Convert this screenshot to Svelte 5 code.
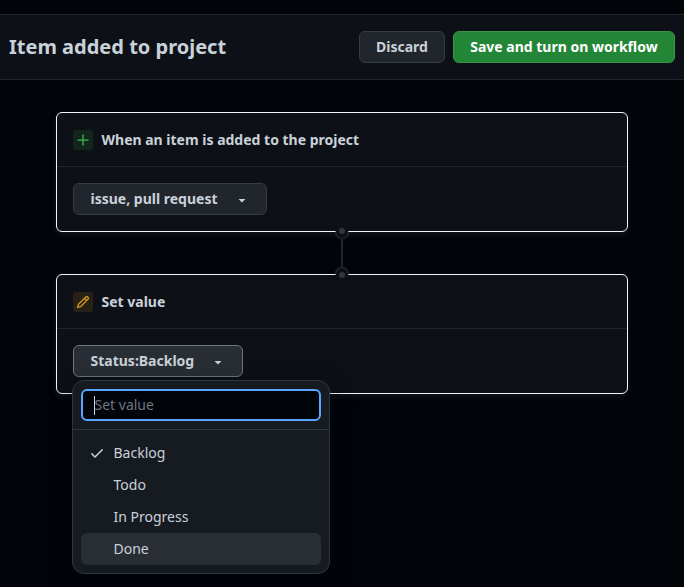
<script>
  const options = ['Backlog', 'Todo', 'In Progress', 'Done'];
  let selected = $state('Backlog');
  let highlighted = $state('Done');
  let query = $state('');
</script>

<div class="page">
  <header>
    <h1>Item added to project</h1>
    <button class="btn discard">Discard</button>
    <button class="btn primary">Save and turn on workflow</button>
  </header>

  <main>
    <section class="card">
      <div class="card-head">
        <span class="badge add">
          <svg width="16" height="16" viewBox="0 0 16 16" fill="currentColor"><path d="M7.300 2.500h1.300v4.900H13.500v1.300H8.600V13.500H7.300V8.700H2.500V7.400h4.800z" /></svg>
        </span>
        <h2>When an item is added to the project</h2>
      </div>
      <div class="card-body">
        <button class="btn select issue">issue, pull request <span class="caret"></span></button>
      </div>
    </section>

    <div class="link">
      <svg width="20" height="60" viewBox="0 0 20 60" fill="none">
        <path d="M10 15v30" stroke="#21262d" stroke-width="2" />
        <circle cx="10" cy="8" r="6.500" fill="#0d1117" />
        <circle cx="10" cy="52" r="6.500" fill="#0d1117" />
        <path d="M3.500 9a6.500 6.500 0 0 0 13 0M3.500 51a6.500 6.500 0 0 1 13 0" stroke="#21262d" stroke-width="1.500" />
        <circle cx="10" cy="8" r="3" fill="#30363d" />
        <circle cx="10" cy="52" r="3" fill="#30363d" />
      </svg>
    </div>

    <section class="card">
      <div class="card-head">
        <span class="badge edit">
          <svg width="14" height="14" viewBox="0 0 16 16" fill="currentColor"><path d="M11.013 1.427a1.750 1.750 0 0 1 2.474 0l1.086 1.086a1.750 1.750 0 0 1 0 2.474l-8.610 8.610c-.210.210-.470.364-.756.445l-3.251.930a.750.750 0 0 1-.927-.928l.929-3.250c.081-.286.235-.547.445-.758l8.610-8.610Zm.176 4.823L9.750 4.810l-6.286 6.287a.253.253 0 0 0-.064.108l-.558 1.953 1.953-.558a.253.253 0 0 0 .108-.064Zm1.238-3.763a.250.250 0 0 0-.354 0L10.811 3.750l1.439 1.440 1.263-1.263a.250.250 0 0 0 0-.354Z" /></svg>
        </span>
        <h2>Set value</h2>
      </div>
      <div class="card-body">
        <button class="btn select status">Status:{selected} <span class="caret"></span></button>
        <div class="menu">
          <div class="filter">
            <div class="field">
              <i class="cursor"></i>
              <input placeholder="Set value" bind:value={query} />
            </div>
          </div>
          <ul>
            {#each options as option}
              <li class:active={option === highlighted}>
                <button onclick={() => (selected = option)} onmouseenter={() => (highlighted = option)}>
                  <span class="mark">
                    {#if option === selected}
                      <svg width="16" height="16" viewBox="0 0 16 16" fill="currentColor"><path d="M13.780 4.220a.750.750 0 0 1 0 1.060l-7.250 7.250a.750.750 0 0 1-1.060 0L2.220 9.280a.751.751 0 0 1 .018-1.042.751.751 0 0 1 1.042-.018L6 10.940l6.720-6.720a.750.750 0 0 1 1.060 0Z" /></svg>
                    {/if}
                  </span>
                  {option}
                </button>
              </li>
            {/each}
          </ul>
        </div>
      </div>
    </section>
  </main>
</div>

<style>
  :global(body) { background: #010409; }
  * { box-sizing: border-box; }
  .page {
    height: 587px;
    padding-top: 14px;
    overflow: hidden;
    background: #010409;
    color: #c9d1d9;
    font: 14px/20px "Noto Sans", sans-serif;
  }
  header {
    display: flex;
    align-items: center;
    gap: 8px;
    height: 66px;
    padding: 0 9px;
    background: #0d1117;
    border-top: 1px solid #21262d;
    border-bottom: 1px solid #21262d;
  }
  h1 { margin: 0 auto 0 0; font-size: 20px; line-height: 30px; font-weight: 700; white-space: nowrap; }
  h2 { margin: 0; font-size: 14px; line-height: 20px; font-weight: 700; }
  button { font: inherit; color: inherit; }
  svg { display: block; }
  .btn {
    height: 32px;
    padding: 0;
    border: 1px solid #363b42;
    border-radius: 6px;
    background: #21262d;
    font-weight: 700;
    white-space: nowrap;
  }
  .discard { width: 86px; }
  .primary { width: 222px; background: #238636; border-color: #399548; color: #fff; }
  main { width: 572px; margin: 32px auto 0; }
  .card {
    height: 120px;
    background: #0d1117;
    border: 1px solid #f0f6fc;
    border-radius: 6px;
    box-shadow: 0 3px 6px rgba(33, 38, 45, .5);
  }
  .card-head {
    display: flex;
    align-items: center;
    gap: 8.500px;
    height: 54px;
    padding-left: 16px;
    border-bottom: 1px solid #21262d;
  }
  .badge { display: grid; place-items: center; width: 20px; height: 20px; border-radius: 3px; }
  .add { background: #12261e; color: #3fb950; }
  .edit { background: #272115; color: #d29922; }
  .card-body { position: relative; padding: 16px; }
  .select { display: flex; align-items: center; justify-content: space-between; padding: 0 20px 0 16.500px; }
  .issue { width: 194px; }
  .status { width: 170px; background: #282e33; border-color: #6e7681; }
  .caret { width: 8px; height: 4px; margin-top: 3px; background: currentColor; clip-path: polygon(0 0, 100% 0, 50% 100%); }
  .link { position: relative; z-index: 1; display: flex; justify-content: center; height: 60px; margin: -9px 0; }
  .menu {
    position: absolute;
    z-index: 2;
    top: 51px;
    left: 15px;
    width: 258px;
    height: 194px;
    background: #161b22;
    border: 1px solid #30363d;
    border-radius: 12px;
    box-shadow: 0 8px 24px rgba(1, 4, 9, .5);
    overflow: hidden;
  }
  .filter { height: 49px; padding: 8px; border-bottom: 1px solid #30363d; }
  .field {
    display: flex;
    align-items: center;
    height: 32px;
    padding-left: 11px;
    border: 2px solid #58a6ff;
    border-radius: 6px;
    background: #010409;
  }
  .cursor { width: 1px; height: 19px; margin-right: -.5px; background: #c9d1d9; }
  input { width: 200px; height: 20px; padding: 0; border: 0; outline: 0; background: none; color: #c9d1d9; font: inherit; }
  input::placeholder { color: #6e7681; opacity: 1; }
  ul { margin: 0; padding: 7px 8px; list-style: none; }
  li { border-radius: 6px; }
  li.active { background: #282e34; }
  li button { display: flex; align-items: center; width: 100%; height: 32px; padding: 0 8px; border: 0; background: none; text-align: left; }
  .mark { width: 16px; height: 16px; margin-right: 8.500px; }
</style>
